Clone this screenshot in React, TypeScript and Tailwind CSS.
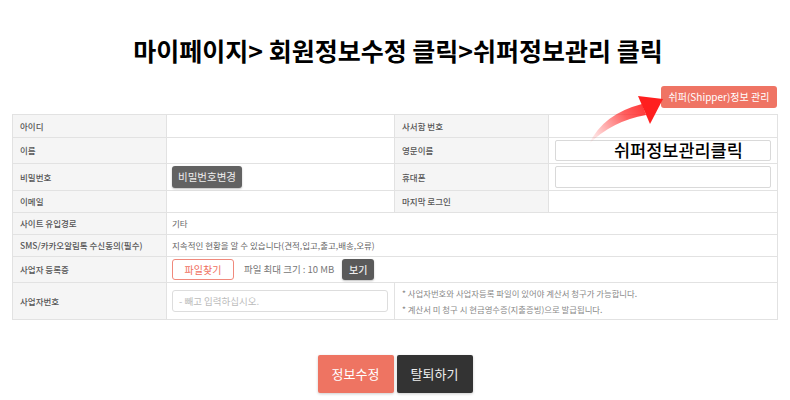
export default function App() {
  const L =
    "flex items-center pl-[7px] bg-[#f5f5f5] border-r border-b border-[#e2e2e2] text-[8.5px] text-[#555] font-medium whitespace-nowrap";
  const V =
    "flex items-center pl-[5px] bg-white border-r border-b border-[#e2e2e2] text-[8.5px] text-[#666] whitespace-nowrap";
  return (
    <div className="relative w-[790px] h-[400px] bg-white overflow-hidden font-['Noto_Sans_CJK_KR','Noto_Sans',sans-serif]">
      <h1 className="pt-[34px] pl-[6px] text-center text-[25px] leading-[32px] font-bold text-black">
        마이페이지&gt; 회원정보수정 클릭&gt;쉬퍼정보관리 클릭
      </h1>

      <div className="mt-[20px] flex justify-end pr-[13px]">
        <button className="h-[22px] w-[116px] rounded-[3px] bg-[#ef7464] text-[10px] text-white leading-none">
          쉬퍼(Shipper)정보 관리
        </button>
      </div>

      <div className="mt-[6px] ml-[12px] w-[766px] grid grid-cols-[154px_228px_154px_229px] border-l border-t border-[#e2e2e2]">
        {/* row 1 */}
        <div className={`${L} h-[23px]`}>아이디</div>
        <div className={`${V} h-[23px]`}></div>
        <div className={`${L} h-[23px]`}>사서함 번호</div>
        <div className={`${V} h-[23px]`}></div>

        {/* row 2 */}
        <div className={`${L} h-[26px]`}>이름</div>
        <div className={`${V} h-[26px]`}></div>
        <div className={`${L} h-[26px]`}>영문이름</div>
        <div className={`${V} h-[26px] pl-[6px]`}>
          <div className="h-[21px] w-[216px] rounded-[2px] border border-[#d9d9d9] bg-white" />
        </div>

        {/* row 3 */}
        <div className={`${L} h-[27px]`}>비밀번호</div>
        <div className={`${V} h-[27px]`}>
          <button className="h-[22px] w-[70px] rounded-[3px] bg-[#626262] text-[10.5px] text-[#eeeeee] leading-none shadow-[0_1px_2px_rgba(0,0,0,0.25)]">
            비밀번호변경
          </button>
        </div>
        <div className={`${L} h-[27px]`}>휴대폰</div>
        <div className={`${V} h-[27px] pl-[6px]`}>
          <div className="h-[22px] w-[216px] rounded-[2px] border border-[#d9d9d9] bg-white" />
        </div>

        {/* row 4 */}
        <div className={`${L} h-[22px]`}>이메일</div>
        <div className={`${V} h-[22px]`}></div>
        <div className={`${L} h-[22px]`}>마지막 로그인</div>
        <div className={`${V} h-[22px]`}></div>

        {/* row 5 */}
        <div className={`${L} h-[22px]`}>사이트 유입경로</div>
        <div className={`${V} h-[22px] col-span-3`}>기타</div>

        {/* row 6 */}
        <div className={`${L} h-[22px]`}>SMS/카카오알림톡 수신동의(필수)</div>
        <div className={`${V} h-[22px] col-span-3`}>
          지속적인 현황을 알 수 있습니다(견적,입고,출고,배송,오류)
        </div>

        {/* row 7 */}
        <div className={`${L} h-[26px]`}>사업자 등록증</div>
        <div className={`${V} h-[26px] col-span-3`}>
          <button className="h-[21px] w-[62px] rounded-[3px] border border-[#f0897c] bg-white text-[10px] text-[#ef6f5e] leading-none">
            파일찾기
          </button>
          <span className="ml-[10px] text-[9.5px] text-[#777]">파일 최대 크기 : 10 MB</span>
          <button className="ml-[8px] h-[21px] w-[32px] rounded-[3px] bg-[#5a5a5a] text-[10px] font-medium text-[#eeeeee] leading-none shadow-[0_1px_2px_rgba(0,0,0,0.25)]">
            보기
          </button>
        </div>

        {/* row 8 */}
        <div className={`${L} h-[37px]`}>사업자번호</div>
        <div className={`${V} h-[37px]`}>
          <div className="flex h-[22px] w-[216px] items-center rounded-[3px] border border-[#dddddd] bg-white pl-[6px] text-[9.5px] text-[#bbbbbb]">
            - 빼고 입력하십시오.
          </div>
        </div>
        <div className="col-span-2 flex h-[37px] flex-col justify-center gap-[5px] border-r border-b border-[#e2e2e2] bg-white pl-[7px] text-[8.4px] leading-[11px] text-[#888] whitespace-nowrap">
          <div>* 사업자번호와 사업자등록 파일이 있어야 계산서 청구가 가능합니다.</div>
          <div>* 계산서 미 청구 시 현금영수증(지출증빙)으로 발급됩니다.</div>
        </div>
      </div>

      <div className="mt-[35px] flex justify-center gap-[3px]">
        <button className="h-[38px] w-[76px] rounded-[2px] bg-[#ee7462] text-[13px] text-white shadow-[0_1px_3px_rgba(0,0,0,0.2)]">
          정보수정
        </button>
        <button className="h-[38px] w-[76px] rounded-[2px] bg-[#333333] text-[13px] text-[#eeeeee] shadow-[0_1px_3px_rgba(0,0,0,0.2)]">
          탈퇴하기
        </button>
      </div>

      {/* annotation arrow */}
      <svg className="pointer-events-none absolute left-0 top-0" width="790" height="400" viewBox="0 0 790 400">
        <defs>
          <linearGradient id="arr" x1="590" y1="145" x2="660" y2="100" gradientUnits="userSpaceOnUse">
            <stop offset="0" stopColor="#ff2a2a" stopOpacity="0" />
            <stop offset="0.55" stopColor="#ff2a2a" stopOpacity="0.75" />
            <stop offset="1" stopColor="#ff1a1a" stopOpacity="1" />
          </linearGradient>
        </defs>
        <path
          d="M589 144 Q603 114 642 104 L646 115 Q612 121 589 144 Z"
          fill="url(#arr)"
        />
        <path d="M638 96 L663 99 L650 124 Z" fill="#ff1f1f" />
      </svg>

      <div className="absolute left-[614px] top-[141px] text-[17.5px] leading-none font-medium text-black">
        쉬퍼정보관리클릭
      </div>
    </div>
  );
}
